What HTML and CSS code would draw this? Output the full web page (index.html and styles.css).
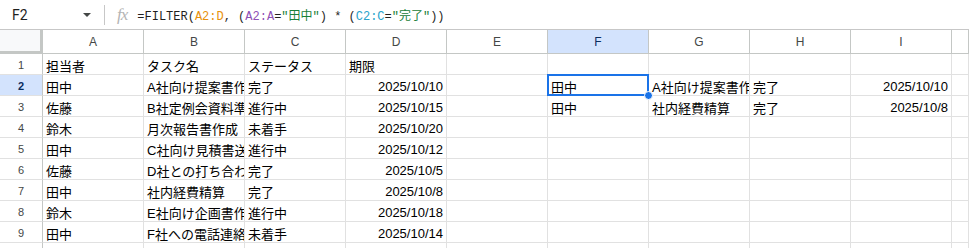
FILE: index.html
```html
<!DOCTYPE html>
<html lang="ja">
<head>
    <meta charset="UTF-8">
    <meta name="viewport" content="width=device-width, initial-scale=1.0">
    <title>タスク一覧 - スプレッドシート</title>
    <link rel="stylesheet" href="styles.css">
</head>
<body>
    <div class="formula-bar">
        <div class="name-box">
            <span class="cell-ref">F2</span>
            <span class="caret"></span>
        </div>
        <div class="divider"></div>
        <span class="fx">fx</span>
        <div class="formula">=FILTER(<span class="r1">A2:D</span>, (<span class="r2">A2:A</span>=<span class="str">"田中"</span>) * (<span class="r3">C2:C</span>=<span class="str">"完了"</span>))</div>
    </div>

    <div class="sheet">
        <div class="corner"></div>
        <div class="col-head">A</div>
        <div class="col-head">B</div>
        <div class="col-head">C</div>
        <div class="col-head">D</div>
        <div class="col-head">E</div>
        <div class="col-head active">F</div>
        <div class="col-head">G</div>
        <div class="col-head">H</div>
        <div class="col-head">I</div>
        <div class="col-head"></div>

        <div class="row-head">1</div>
        <div class="cell">担当者</div><div class="cell">タスク名</div><div class="cell">ステータス</div><div class="cell">期限</div>
        <div class="cell"></div><div class="cell"></div><div class="cell"></div><div class="cell"></div><div class="cell"></div><div class="cell"></div>

        <div class="row-head active">2</div>
        <div class="cell">田中</div><div class="cell">A社向け提案書作成</div><div class="cell">完了</div><div class="cell num">2025/10/10</div>
        <div class="cell"></div><div class="cell selected">田中<span class="handle"></span></div><div class="cell">A社向け提案書作成</div><div class="cell">完了</div><div class="cell num">2025/10/10</div><div class="cell"></div>

        <div class="row-head">3</div>
        <div class="cell">佐藤</div><div class="cell">B社定例会資料準備</div><div class="cell">進行中</div><div class="cell num">2025/10/15</div>
        <div class="cell"></div><div class="cell">田中</div><div class="cell">社内経費精算</div><div class="cell">完了</div><div class="cell num">2025/10/8</div><div class="cell"></div>

        <div class="row-head">4</div>
        <div class="cell">鈴木</div><div class="cell">月次報告書作成</div><div class="cell">未着手</div><div class="cell num">2025/10/20</div>
        <div class="cell"></div><div class="cell"></div><div class="cell"></div><div class="cell"></div><div class="cell"></div><div class="cell"></div>

        <div class="row-head">5</div>
        <div class="cell">田中</div><div class="cell">C社向け見積書送付</div><div class="cell">進行中</div><div class="cell num">2025/10/12</div>
        <div class="cell"></div><div class="cell"></div><div class="cell"></div><div class="cell"></div><div class="cell"></div><div class="cell"></div>

        <div class="row-head">6</div>
        <div class="cell">佐藤</div><div class="cell">D社との打ち合わせ</div><div class="cell">完了</div><div class="cell num">2025/10/5</div>
        <div class="cell"></div><div class="cell"></div><div class="cell"></div><div class="cell"></div><div class="cell"></div><div class="cell"></div>

        <div class="row-head">7</div>
        <div class="cell">田中</div><div class="cell">社内経費精算</div><div class="cell">完了</div><div class="cell num">2025/10/8</div>
        <div class="cell"></div><div class="cell"></div><div class="cell"></div><div class="cell"></div><div class="cell"></div><div class="cell"></div>

        <div class="row-head">8</div>
        <div class="cell">鈴木</div><div class="cell">E社向け企画書作成</div><div class="cell">進行中</div><div class="cell num">2025/10/18</div>
        <div class="cell"></div><div class="cell"></div><div class="cell"></div><div class="cell"></div><div class="cell"></div><div class="cell"></div>

        <div class="row-head">9</div>
        <div class="cell">田中</div><div class="cell">F社への電話連絡</div><div class="cell">未着手</div><div class="cell num">2025/10/14</div>
        <div class="cell"></div><div class="cell"></div><div class="cell"></div><div class="cell"></div><div class="cell"></div><div class="cell"></div>

        <div class="row-head"></div>
        <div class="cell"></div><div class="cell"></div><div class="cell"></div><div class="cell"></div>
        <div class="cell"></div><div class="cell"></div><div class="cell"></div><div class="cell"></div><div class="cell"></div><div class="cell"></div>
    </div>
</body>
</html>
```

FILE: styles.css
```css
* { box-sizing: border-box; }
body { margin: 0; background: #fff; overflow: hidden; font-family: "Liberation Sans", Arial, "Noto Sans CJK JP", sans-serif; color: #000; }

/* formula bar */
.formula-bar { height: 30px; display: flex; align-items: center; border-bottom: 1px solid #c7c7c7; }
.name-box { width: 104px; display: flex; align-items: center; justify-content: space-between; padding: 0 13px 0 12px; }
.cell-ref { font-family: Roboto, "Liberation Sans", sans-serif; font-size: 14px; color: #1f1f1f; }
.caret { width: 0; height: 0; border-left: 4.5px solid transparent; border-right: 4.5px solid transparent; border-top: 4.5px solid #444746; margin-top: 1px; }
.divider { width: 1px; height: 20px; background: #c7c7c7; }
.fx { font-family: "Liberation Serif", serif; font-style: italic; font-size: 17px; color: #b4b4b4; margin: 0 10px 0 12px; letter-spacing: -1px; }
.formula { font-family: "Liberation Mono", "Noto Sans CJK JP", monospace; font-size: 12px; color: #1f1f1f; white-space: nowrap; }
.r1 { color: #e8910c; }
.r2 { color: #8e4fb5; }
.r3 { color: #27a3cc; }
.str { color: #188038; }

/* grid */
.sheet { display: grid; grid-template-columns: 43px repeat(9, 101px) 1fr; grid-template-rows: 24px; grid-auto-rows: 21px; }
.corner { background: #f8f9fa; border-right: 3px solid #c4c7c5; border-bottom: 3px solid #c4c7c5; }
.col-head { display: flex; align-items: center; justify-content: center; font-size: 12px; color: #444746; border-right: 1px solid #c4c7c5; border-bottom: 1px solid #c4c7c5; }
.col-head.active { background: #d3e3fd; color: #0b2d5e; }
.row-head { display: flex; align-items: center; justify-content: center; font-size: 11px; color: #444746; border-right: 1px solid #c4c7c5; border-bottom: 1px solid #e1e1e1; padding-top: 1px; }
.row-head.active { background: #d3e3fd; color: #0b2d5e; font-weight: bold; }
.cell { display: flex; align-items: center; padding: 2px 3px 0; font-size: 13px; white-space: nowrap; overflow: hidden; border-right: 1px solid #e1e1e1; border-bottom: 1px solid #e1e1e1; }
.cell.num { justify-content: flex-end; }
.cell.selected { overflow: visible; position: relative; }
.cell.selected::after { content: ""; position: absolute; left: -1px; top: -1px; right: -1px; bottom: -1px; border: 2px solid #1a73e8; }
.handle { position: absolute; right: -5px; bottom: -5px; width: 9px; height: 9px; border-radius: 50%; background: #1a73e8; border: 1px solid #fff; z-index: 1; }
```
